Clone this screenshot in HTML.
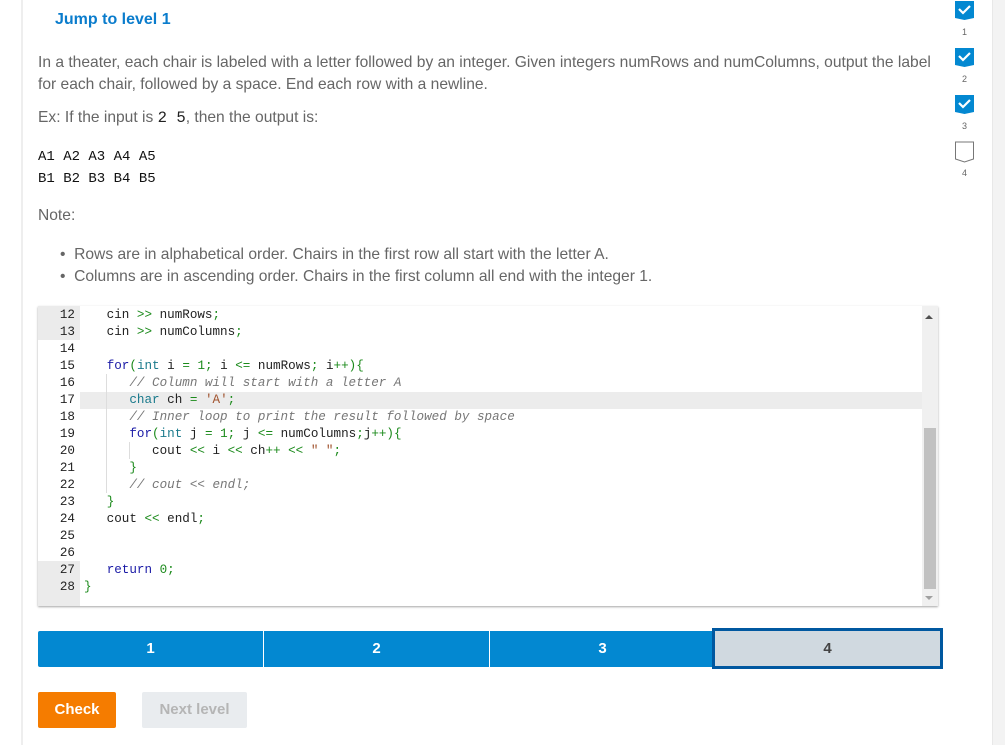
<!DOCTYPE html>
<html><head><meta charset="utf-8"><style>
*{margin:0;padding:0;box-sizing:border-box}
body{width:1005px;height:745px;background:#fff;font-family:"Liberation Sans",sans-serif;position:relative;overflow:hidden;color:#555}
.lline{position:absolute;left:21px;top:0;width:2px;height:745px;background:#eee}
.rstrip{position:absolute;left:992px;top:0;width:13px;height:745px;background:#f3f3f3;border-left:1px solid #e8e8e8}
.abs{position:absolute}
h1{position:absolute;left:55px;top:11px;font-size:16px;font-weight:bold;color:#0a7ccc}
.p{position:absolute;left:38px;font-size:15.6px;line-height:22px;color:#666}
.mono{font-family:"Liberation Mono",monospace;color:#222}
.out{position:absolute;left:38px;font-family:"Liberation Mono",monospace;font-size:14px;color:#111;line-height:22px;white-space:pre}
.ed{position:absolute;left:38px;top:306px;width:900px;height:300px;background:#fff;box-shadow:0 1px 2px rgba(0,0,0,.35);overflow:hidden}
.gut{position:absolute;left:0;top:0;width:42px;height:300px;background:#fff}
.ln{position:absolute;left:0;width:42px;height:17px;text-align:right;padding-right:5px;font-family:"Liberation Mono",monospace;font-size:12.6px;line-height:17px;color:#222}
.cl{position:absolute;left:46px;height:17px;font-family:"Liberation Mono",monospace;font-size:12.6px;line-height:17px;white-space:pre;color:#222}
.k{color:#1a1aa6}.t{color:#1a7a8c}.g{color:#1b8a1b}.s{color:#a0522d}.c{color:#777;font-style:italic}
.lv{position:absolute;top:631px;height:36px;background:#0388d1;color:#fff;font-weight:bold;font-size:15px;text-align:center;line-height:36px}
.num{position:absolute;left:955px;width:19px;text-align:center;font-size:9px;color:#666}
</style></head><body>
<div class="lline"></div><div class="rstrip"></div>
<h1>Jump to level 1</h1>
<div class="p" style="top:52px;width:905px">In a theater, each chair is labeled with a letter followed by an integer. Given integers numRows and numColumns, output the label for each chair, followed by a space. End each row with a newline.</div>
<div class="p" style="top:107px">Ex: If the input is <span class="mono">2 5</span>, then the output is:</div>
<div class="out" style="top:146px">A1 A2 A3 A4 A5
B1 B2 B3 B4 B5</div>
<div class="p" style="top:205px">Note:</div>
<div class="p" style="top:244px;left:60px">•&nbsp; Rows are in alphabetical order. Chairs in the first row all start with the letter A.</div>
<div class="p" style="top:266px;left:60px">•&nbsp; Columns are in ascending order. Chairs in the first column all end with the integer 1.</div>

<div class="ed">
<div class="gut"></div>
<div class="abs" style="left:0;top:0;width:42px;height:34px;background:#ebebeb"></div>
<div class="abs" style="left:0;top:255px;width:42px;height:45px;background:#ebebeb"></div>
<div class="abs" style="left:42px;top:86px;width:842px;height:17px;background:#ececec"></div>
<div class="abs" style="left:68px;top:68px;width:1px;height:119px;background:#ddd"></div>
<div class="abs" style="left:91px;top:136px;width:1px;height:17px;background:#ddd"></div>
<div class="ln" style="top:1px">12</div><div class="ln" style="top:18px">13</div><div class="ln" style="top:35px">14</div><div class="ln" style="top:52px">15</div><div class="ln" style="top:69px">16</div><div class="ln" style="top:86px">17</div><div class="ln" style="top:103px">18</div><div class="ln" style="top:120px">19</div><div class="ln" style="top:137px">20</div><div class="ln" style="top:154px">21</div><div class="ln" style="top:171px">22</div><div class="ln" style="top:188px">23</div><div class="ln" style="top:205px">24</div><div class="ln" style="top:222px">25</div><div class="ln" style="top:239px">26</div><div class="ln" style="top:256px">27</div><div class="ln" style="top:273px">28</div>
<div class="cl" style="top:1px">   cin <span class="g">&gt;&gt;</span> numRows<span class="g">;</span></div>
<div class="cl" style="top:18px">   cin <span class="g">&gt;&gt;</span> numColumns<span class="g">;</span></div>
<div class="cl" style="top:52px">   <span class="k">for</span><span class="g">(</span><span class="t">int</span> i <span class="g">=</span> <span class="g">1;</span> i <span class="g">&lt;=</span> numRows<span class="g">;</span> i<span class="g">++){</span></div>
<div class="cl" style="top:69px">      <span class="c">// Column will start with a letter A</span></div>
<div class="cl" style="top:86px">      <span class="t">char</span> ch <span class="g">=</span> <span class="s">'A'</span><span class="g">;</span></div>
<div class="cl" style="top:103px">      <span class="c">// Inner loop to print the result followed by space</span></div>
<div class="cl" style="top:120px">      <span class="k">for</span><span class="g">(</span><span class="t">int</span> j <span class="g">=</span> <span class="g">1;</span> j <span class="g">&lt;=</span> numColumns<span class="g">;</span>j<span class="g">++){</span></div>
<div class="cl" style="top:137px">         cout <span class="g">&lt;&lt;</span> i <span class="g">&lt;&lt;</span> ch<span class="g">++</span> <span class="g">&lt;&lt;</span> <span class="s">" "</span><span class="g">;</span></div>
<div class="cl" style="top:154px">      <span class="g">}</span></div>
<div class="cl" style="top:171px">      <span class="c">// cout &lt;&lt; endl;</span></div>
<div class="cl" style="top:188px">   <span class="g">}</span></div>
<div class="cl" style="top:205px">   cout <span class="g">&lt;&lt;</span> endl<span class="g">;</span></div>
<div class="cl" style="top:256px">   <span class="k">return</span> <span class="g">0;</span></div>
<div class="cl" style="top:273px"><span class="g">}</span></div>
<div class="abs" style="left:884px;top:0;width:16px;height:300px;background:#f0f0f0"></div>
<div class="abs" style="left:886px;top:122px;width:12px;height:161px;background:#c1c1c1"></div>
<div class="abs" style="left:887px;top:9px;width:0;height:0;border-left:4px solid transparent;border-right:4px solid transparent;border-bottom:4px solid #505050"></div>
<div class="abs" style="left:887px;top:290px;width:0;height:0;border-left:4px solid transparent;border-right:4px solid transparent;border-top:4px solid #a0a0a0"></div>
</div>

<div class="lv" style="left:38px;width:225px;border-radius:2px 0 0 2px">1</div>
<div class="lv" style="left:264px;width:225px">2</div>
<div class="lv" style="left:490px;width:225px">3</div>
<div class="lv" style="left:712px;width:231px;top:628px;height:41px;background:#d0d9e0;border:3px solid #0058a0;color:#444;line-height:35px">4</div>

<div class="abs" style="left:38px;top:692px;width:78px;height:36px;background:#f57c00;border-radius:2px;color:#fff;font-weight:bold;font-size:15px;text-align:center;line-height:36px">Check</div>
<div class="abs" style="left:142px;top:692px;width:105px;height:36px;background:#e9ecef;border-radius:2px;color:#b5b5b5;font-weight:bold;font-size:15px;text-align:center;line-height:36px">Next level</div>

<svg class="abs" style="left:955px;top:0" width="19" height="170" viewBox="0 0 19 170">
<g fill="#0388d1"><path d="M0 1H19V18L9.5 20L0 18Z"/><path d="M0 48H19V65L9.5 67L0 65Z"/><path d="M0 95H19V112L9.5 114L0 112Z"/></g>
<g stroke="#fff" stroke-width="2.2" fill="none"><path d="M4 9L8 13L15 6"/><path d="M4 56L8 60L15 53"/><path d="M4 103L8 107L15 100"/></g>
<path d="M0.5 142H18.5V159L9.5 162L0.5 159Z" fill="#fff" stroke="#777"/>
</svg>
<div class="num" style="top:27px">1</div><div class="num" style="top:74px">2</div><div class="num" style="top:121px">3</div><div class="num" style="top:168px">4</div>
</body></html>
